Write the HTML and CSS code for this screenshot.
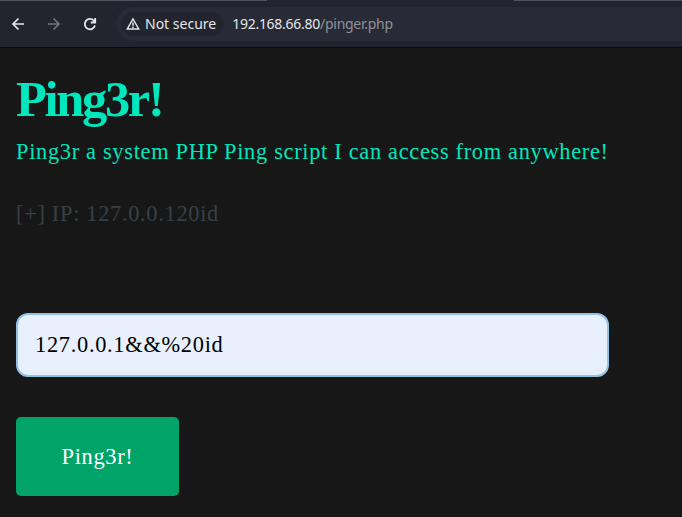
FILE: index.html
```html
<!DOCTYPE html>
<html lang="en">
<head>
<meta charset="utf-8">
<title>Ping3r!</title>
<link rel="stylesheet" href="styles.css">
</head>
<body>
<header class="browser">
  <div class="tabs"><span></span><span></span></div>
  <nav class="toolbar">
    <svg class="nav back" viewBox="0 0 16 16"><path d="M14 8H3M8.5 2.5L3 8l5.5 5.5"/></svg>
    <svg class="nav forward" viewBox="0 0 16 16"><path d="M2 8h11M7.5 2.5L13 8l-5.500 5.500"/></svg>
    <svg class="nav reload" viewBox="0 0 16 16"><path d="M13 9.600A5.200 5.200 0 1 1 11.600 4.300L13 5.700M13.200 2v4.500H8.700"/></svg>
    <div class="address">
      <div class="security"><svg viewBox="0 0 16 16"><path d="M8 3L13.700 13H2.300zM8 6.500v3.200M8 10.600v1.300"/></svg><span>Not secure</span></div>
      <div class="url"><b>192.168.66.80</b>/pinger.php</div>
    </div>
  </nav>
</header>
<main>
  <h1>Ping3r!</h1>
  <p class="intro">Ping3r a system PHP Ping script I can access from anywhere!</p>
  <p class="result">[+] IP: 127.0.0.120id</p>
  <form>
    <input type="text" value="127.0.0.1&amp;&amp;%20id" aria-label="IP">
    <button type="button">Ping3r!</button>
  </form>
</main>
</body>
</html>
```

FILE: styles.css
```css
* { box-sizing: border-box; }
body { margin: 0; height: 517px; overflow: hidden; background: #171717; font-family: "Liberation Serif", serif; letter-spacing: .68px; }
.browser { height: 48px; background: #23252e; border-bottom: 1px solid #08090b; font-family: "Noto Sans", sans-serif; letter-spacing: 0; }
.tabs { height: 1px; display: flex; justify-content: space-between; }
.tabs span { width: 267px; background: #50535c; }
.tabs span:last-child { width: 168px; }
.toolbar { height: 46px; display: flex; align-items: center; padding-left: 10px; }
.nav { width: 16px; height: 16px; margin-right: 20px; fill: none; stroke: #e5e6e8; stroke-width: 1.7; }
.forward { stroke: #71737a; }
.reload { margin-right: 18px; stroke-width: 1.8; }
.address { flex: 1; height: 34px; background: #282a35; border-radius: 17px 0 0 17px; display: flex; align-items: center; font-size: 14px; }
.security { height: 24px; margin-left: 5px; padding: 0 8px 0 4px; border-radius: 12px; background: #23252e; color: #e5e6e8; display: flex; align-items: center; gap: 4px; line-height: 20px; }
.security svg { width: 16px; height: 16px; fill: none; stroke: #e5e6e8; stroke-width: 1.5; }
.url { margin-left: 8px; line-height: 20px; color: #8f919a; letter-spacing: -.27px; }
.url b { color: #e5e6e8; font-weight: 400; }
main { padding: 22px 16px 0; }
h1 { margin: 0; color: #00e6bd; font-size: 50.4px; line-height: 58px; letter-spacing: -2.27px; }
p { margin: 0; font-size: 22.4px; line-height: 28px; white-space: nowrap; }
.intro { margin-top: 10px; color: #00e6bd; }
.result { margin-top: 34px; color: #374047; }
input { display: block; width: 593px; height: 64px; margin-top: 85px; padding: 0 17px; border: 2px solid #91c1e5; border-radius: 12px; background: #e8f0fe; color: #000; font: 22.4px "Liberation Serif", serif; letter-spacing: .7px; }
button { display: block; width: 163px; height: 79px; margin-top: 40px; border: 0; border-radius: 5px; background: #00a368; color: #fff; font: 22.4px "Liberation Serif", serif; letter-spacing: .68px; }
```
